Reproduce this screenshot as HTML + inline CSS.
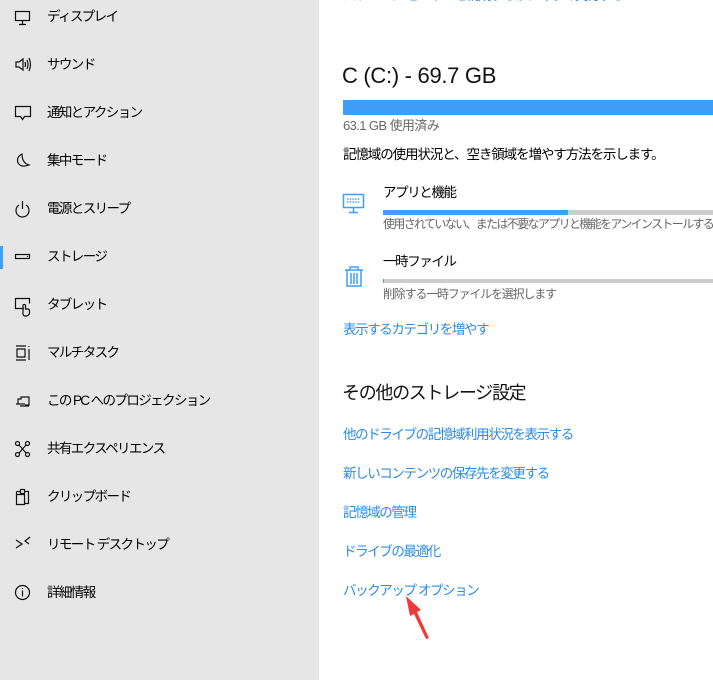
<!DOCTYPE html>
<html><head><meta charset="utf-8"><style>
*{margin:0;padding:0;box-sizing:border-box}
body{width:713px;height:680px;overflow:hidden;background:#fff;font-family:"Liberation Sans","Noto Sans CJK JP",sans-serif;position:relative}
.side{position:absolute;left:0;top:0;width:319px;height:680px;background:#e6e6e6}
.it{position:absolute;left:47px;font-size:13.5px;color:#000;line-height:20px;letter-spacing:-1.6px;white-space:nowrap}
.ab{position:absolute;color:#000;white-space:nowrap}
.lk{position:absolute;left:343px;font-size:13.5px;color:#2b8be6;line-height:20px;letter-spacing:-1.4px;white-space:nowrap}
</style></head><body>
<div class="side">
<div style="position:absolute;left:0;top:246px;width:3px;height:23px;background:#3f9ef7"></div>
<svg style="position:absolute;left:0;top:0" width="40" height="680" fill="none" stroke="#111" stroke-width="1.2">
<rect x="15.5" y="11.5" width="14" height="9"/><path d="M22.5 21v3M19 24.5h7"/>
<path d="M16 62h3l4-3v11l-4-3h-3z M25 62q1 2.5 0 5 M27 60q2 4.5 0 9 M29 58q3 6.5 0 13"/>
<path d="M15.5 106.5h15v10h-6l-2 3-2-3h-5z"/>
<path d="M22 154q-6 3-4 9q3 5 11 2q-7-2-7-11z"/>
<path d="M19 205a6.5 6.5 0 1 0 7 0M22.5 201v8"/>
<rect x="15.5" y="254.5" width="14" height="4"/><path d="M27 256.5h1"/>
<path d="M24 308.5h-8.5v-10h14v5M23 312v-7q1.5-1 2.5 0v4h2q2 0 2 2v2q0 2-3 3h-2q-2-1-1.5-4"/>
<path d="M16 346h10M16 360h10M17 349h8v8h-8zM29 346v1M29 349v11"/>
<path d="M16 404h9M18 404v-5h3v-2h8v8h-4M20 406h9"/>
<circle cx="17.5" cy="443.5" r="2"/><circle cx="27.5" cy="443.5" r="2"/><circle cx="17.5" cy="454.5" r="2"/><circle cx="27.5" cy="454.5" r="2"/><path d="M19 445l7 8M26 445l-7 8"/>
<path d="M16.5 491.5h4v-2h4v2h4v12h-4M16.5 491.5v13h8v-10h-8M20.5 489.5v4h4v-4"/>
<path d="M16 540l6 4-6 4M30 537l-5 4 4 3"/>
<circle cx="22.5" cy="592.5" r="7"/><path d="M22.5 590.5v6M22.5 588v1"/>
</svg>
<div class="it" style="top:7px">ディスプレイ</div>
<div class="it" style="top:55px">サウンド</div>
<div class="it" style="top:103px">通知とアクション</div>
<div class="it" style="top:151px">集中モード</div>
<div class="it" style="top:199px">電源とスリープ</div>
<div class="it" style="top:247px">ストレージ</div>
<div class="it" style="top:295px">タブレット</div>
<div class="it" style="top:343px">マルチタスク</div>
<div class="it" style="top:391px">この PC へのプロジェクション</div>
<div class="it" style="top:439px">共有エクスペリエンス</div>
<div class="it" style="top:487px">クリップボード</div>
<div class="it" style="top:535px">リモート デスクトップ</div>
<div class="it" style="top:583px">詳細情報</div>
</div>
<div class="lk" style="top:-14px">ストレージ センサーを構成するか、今すぐ実行する</div>
<div class="ab" style="left:342px;top:62px;font-size:22px;line-height:28px;color:#111;letter-spacing:-0.3px">C (C:) - 69.7 GB</div>
<div style="position:absolute;left:343px;top:100px;width:370px;height:15px;background:#409ef8"></div>
<div class="ab" style="left:343px;top:117px;font-size:13px;color:#666;line-height:18px;letter-spacing:-0.6px">63.1 GB 使用済み</div>
<div class="ab" style="left:343px;top:145px;font-size:13.5px;line-height:20px;letter-spacing:-1.1px">記憶域の使用状況と、空き領域を増やす方法を示します。</div>
<svg style="position:absolute;left:340px;top:188px" width="30" height="100" fill="none" stroke="#3f9ef7" stroke-width="1.5">
<rect x="3.5" y="6.5" width="20" height="13"/><path d="M13.5 20v4M9 24.5h9"/>
<path d="M7 11h13M7 14h13" stroke-dasharray="1.5 1.2"/>
<path d="M5 82h18M10 82v-3h8v3M7 82v16h14v-16M11 85v11M14 85v11M17 85v11"/>
</svg>
<div class="ab" style="left:383px;top:183px;font-size:13.5px;line-height:20px;letter-spacing:-1.4px">アプリと機能</div>
<div style="position:absolute;left:383px;top:210px;width:330px;height:5px;background:#ccc"></div>
<div style="position:absolute;left:383px;top:210px;width:185px;height:5px;background:#409ef8"></div>
<div class="ab" style="left:383px;top:216px;font-size:12px;color:#666;line-height:17px;letter-spacing:-1.65px">使用されていない、または不要なアプリと機能をアンインストールする</div>
<div class="ab" style="left:383px;top:252px;font-size:13.5px;line-height:20px;letter-spacing:-1.4px">一時ファイル</div>
<div style="position:absolute;left:383px;top:279px;width:330px;height:4px;background:#ccc"></div>
<div style="position:absolute;left:383px;top:279px;width:1px;height:4px;background:#409ef8"></div>
<div class="ab" style="left:383px;top:286px;font-size:12px;color:#666;line-height:17px;letter-spacing:-1.2px">削除する一時ファイルを選択します</div>
<div class="lk" style="top:320px">表示するカテゴリを増やす</div>
<div class="ab" style="left:342px;top:381px;font-size:18px;line-height:25px;color:#111;letter-spacing:-1.3px">その他のストレージ設定</div>
<div class="lk" style="top:425px">他のドライブの記憶域利用状況を表示する</div>
<div class="lk" style="top:464px">新しいコンテンツの保存先を変更する</div>
<div class="lk" style="top:503px">記憶域の管理</div>
<div class="lk" style="top:542px">ドライブの最適化</div>
<div class="lk" style="top:581px">バックアップ オプション</div>
<svg style="position:absolute;left:0;top:0" width="713" height="680"><path d="M406 596l15 14-4 2 12 26-3 1-12-25-4 2z" fill="#f03a3a"/></svg>
</body></html>
